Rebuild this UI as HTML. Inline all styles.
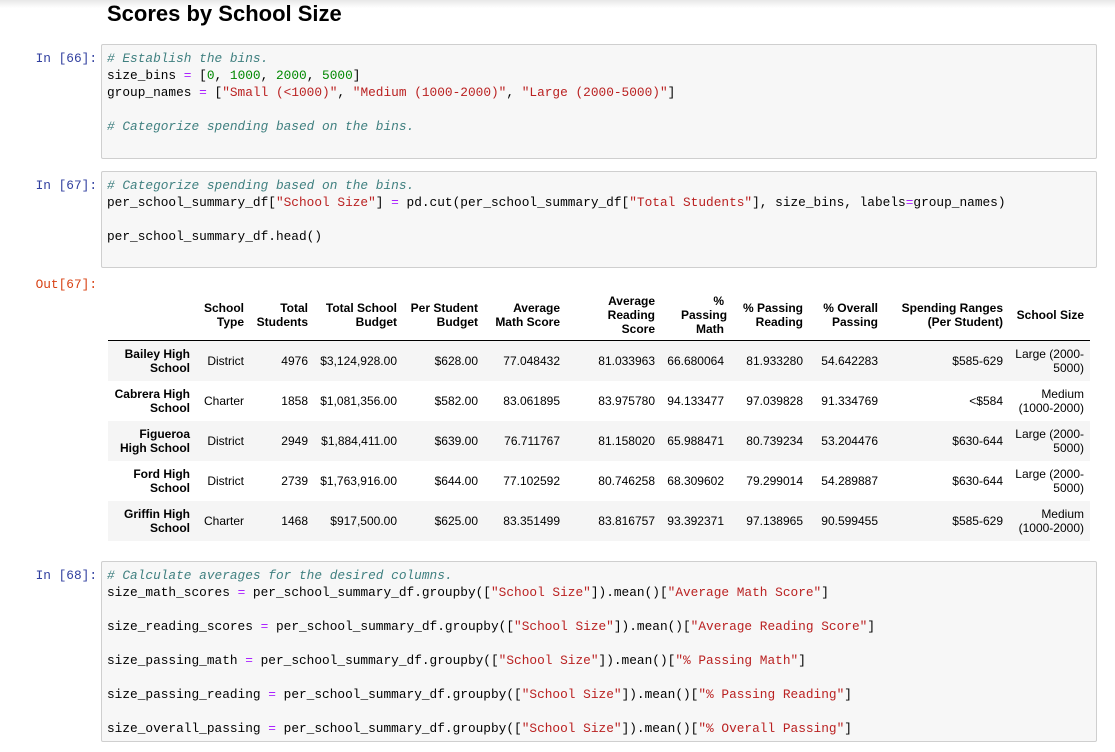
<!DOCTYPE html>
<html><head><meta charset="utf-8"><style>
body{margin:0;width:1115px;height:752px;background:#fff;overflow:hidden;position:relative;font-family:"Liberation Sans",Arial,sans-serif;}
.topbar{position:absolute;left:0;top:0;width:1115px;height:8px;background:linear-gradient(#e8e8e8,#fff);}
h2{position:absolute;left:107px;top:0;margin:0;font-size:22px;font-weight:bold;line-height:28px;color:#000;}
.prompt{position:absolute;width:97px;text-align:right;font-family:"Liberation Mono",monospace;font-size:12.8px;line-height:17px;color:#303f9f;}
.out{color:#d84315;}
.box{position:absolute;left:101px;width:994px;background:#f7f7f7;border:1px solid #cfcfcf;border-radius:2px;}
pre{margin:0;padding:5px 0 0 5px;font-family:"Liberation Mono",monospace;font-size:12.8px;line-height:17px;color:#000;white-space:pre;}
.c{color:#408080;font-style:italic}.n{color:#080}.s{color:#ba2121}.o{color:#aa22ff}
table{position:absolute;left:108px;top:290px;border-collapse:collapse;table-layout:fixed;width:982px;font-size:12px;}
td,th{padding:0 6px 0 0;text-align:right;vertical-align:middle;line-height:14px;}
th{font-weight:bold;height:50px;}
thead tr{border-bottom:1px solid #000;}
tbody td{height:40px;}
tbody th{height:40px;padding-left:4px;}
tbody tr:nth-child(odd){background:#f5f5f5;}
</style></head><body>
<div class="topbar"></div>
<h2>Scores by School Size</h2>

<div class="prompt" style="top:50px">In [66]:</div>
<div class="box" style="top:44px;height:113px"><pre><span class="c"># Establish the bins.</span>
size_bins <span class="o">=</span> [<span class="n">0</span>, <span class="n">1000</span>, <span class="n">2000</span>, <span class="n">5000</span>]
group_names <span class="o">=</span> [<span class="s">"Small (&lt;1000)"</span>, <span class="s">"Medium (1000-2000)"</span>, <span class="s">"Large (2000-5000)"</span>]

<span class="c"># Categorize spending based on the bins.</span></pre></div>

<div class="prompt" style="top:177px">In [67]:</div>
<div class="box" style="top:171px;height:95px"><pre><span class="c"># Categorize spending based on the bins.</span>
per_school_summary_df[<span class="s">"School Size"</span>] <span class="o">=</span> pd.cut(per_school_summary_df[<span class="s">"Total Students"</span>], size_bins, labels<span class="o">=</span>group_names)

per_school_summary_df.head()</pre></div>

<div class="prompt out" style="top:276px">Out[67]:</div>
<table>
<colgroup><col style="width:88px"><col style="width:54px"><col style="width:64px"><col style="width:89px"><col style="width:81px"><col style="width:82px"><col style="width:95px"><col style="width:69px"><col style="width:79px"><col style="width:75px"><col style="width:125px"><col style="width:81px"></colgroup>
<thead><tr><th></th><th>School Type</th><th>Total Students</th><th>Total School Budget</th><th>Per Student Budget</th><th>Average Math Score</th><th style="padding-left:28px">Average Reading Score</th><th style="padding-left:20px">% Passing Math</th><th>% Passing Reading</th><th>% Overall Passing</th><th>Spending Ranges (Per Student)</th><th>School Size</th></tr></thead>
<tbody>
<tr><th>Bailey High School</th><td>District</td><td>4976</td><td>$3,124,928.00</td><td>$628.00</td><td>77.048432</td><td>81.033963</td><td>66.680064</td><td>81.933280</td><td>54.642283</td><td>$585-629</td><td>Large (2000-5000)</td></tr>
<tr><th>Cabrera High School</th><td>Charter</td><td>1858</td><td>$1,081,356.00</td><td>$582.00</td><td>83.061895</td><td>83.975780</td><td>94.133477</td><td>97.039828</td><td>91.334769</td><td>&lt;$584</td><td>Medium (1000-2000)</td></tr>
<tr><th>Figueroa<br>High School</th><td>District</td><td>2949</td><td>$1,884,411.00</td><td>$639.00</td><td>76.711767</td><td>81.158020</td><td>65.988471</td><td>80.739234</td><td>53.204476</td><td>$630-644</td><td>Large (2000-5000)</td></tr>
<tr><th>Ford High School</th><td>District</td><td>2739</td><td>$1,763,916.00</td><td>$644.00</td><td>77.102592</td><td>80.746258</td><td>68.309602</td><td>79.299014</td><td>54.289887</td><td>$630-644</td><td>Large (2000-5000)</td></tr>
<tr><th>Griffin High School</th><td>Charter</td><td>1468</td><td>$917,500.00</td><td>$625.00</td><td>83.351499</td><td>83.816757</td><td>93.392371</td><td>97.138965</td><td>90.599455</td><td>$585-629</td><td>Medium (1000-2000)</td></tr>
</tbody></table>

<div class="prompt" style="top:567px">In [68]:</div>
<div class="box" style="top:561px;height:179px"><pre><span class="c"># Calculate averages for the desired columns.</span>
size_math_scores <span class="o">=</span> per_school_summary_df.groupby([<span class="s">"School Size"</span>]).mean()[<span class="s">"Average Math Score"</span>]

size_reading_scores <span class="o">=</span> per_school_summary_df.groupby([<span class="s">"School Size"</span>]).mean()[<span class="s">"Average Reading Score"</span>]

size_passing_math <span class="o">=</span> per_school_summary_df.groupby([<span class="s">"School Size"</span>]).mean()[<span class="s">"% Passing Math"</span>]

size_passing_reading <span class="o">=</span> per_school_summary_df.groupby([<span class="s">"School Size"</span>]).mean()[<span class="s">"% Passing Reading"</span>]

size_overall_passing <span class="o">=</span> per_school_summary_df.groupby([<span class="s">"School Size"</span>]).mean()[<span class="s">"% Overall Passing"</span>]</pre></div>
</body></html>
